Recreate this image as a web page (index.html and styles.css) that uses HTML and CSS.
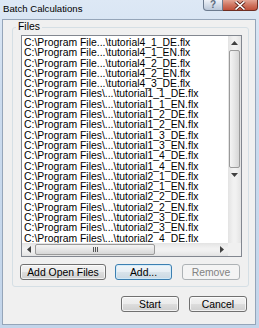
FILE: index.html
```html
<!DOCTYPE html>
<html lang="en">
<head>
    <meta charset="UTF-8">
    <meta name="viewport" content="width=device-width, initial-scale=1.0">
    <title>Batch Calculations</title>
    <link rel="stylesheet" href="styles.css">
</head>
<body>
    <div class="window">
        <div class="titlebar">
            <span class="title">Batch Calculations</span>
            <div class="caption-buttons">
                <span class="cap-help">?</span>
                <span class="cap-close">
                    <svg width="12" height="9" viewBox="0 0 12 9">
                        <path d="M1.5 0.5 L10.5 8.5 M10.5 0.5 L1.5 8.5" stroke="#5a2018" stroke-width="3.2"/>
                        <path d="M1.5 0.5 L10.5 8.5 M10.5 0.5 L1.5 8.5" stroke="#fff" stroke-width="1.6"/>
                    </svg>
                </span>
            </div>
        </div>
        <div class="client">
            <fieldset class="group">
                <legend>Files</legend>
                <div class="listbox">
                    <div class="list-area">
                        <div class="items">
                            <div>C:\Program File...\tutorial4_1_DE.flx</div>
                            <div>C:\Program File...\tutorial4_1_EN.flx</div>
                            <div>C:\Program File...\tutorial4_2_DE.flx</div>
                            <div>C:\Program File...\tutorial4_2_EN.flx</div>
                            <div>C:\Program File...\tutorial4_3_DE.flx</div>
                            <div>C:\Program Files\...\tutorial1_1_DE.flx</div>
                            <div>C:\Program Files\...\tutorial1_1_EN.flx</div>
                            <div>C:\Program Files\...\tutorial1_2_DE.flx</div>
                            <div>C:\Program Files\...\tutorial1_2_EN.flx</div>
                            <div>C:\Program Files\...\tutorial1_3_DE.flx</div>
                            <div>C:\Program Files\...\tutorial1_3_EN.flx</div>
                            <div>C:\Program Files\...\tutorial1_4_DE.flx</div>
                            <div>C:\Program Files\...\tutorial1_4_EN.flx</div>
                            <div>C:\Program Files\...\tutorial2_1_DE.flx</div>
                            <div>C:\Program Files\...\tutorial2_1_EN.flx</div>
                            <div>C:\Program Files\...\tutorial2_2_DE.flx</div>
                            <div>C:\Program Files\...\tutorial2_2_EN.flx</div>
                            <div>C:\Program Files\...\tutorial2_3_DE.flx</div>
                            <div>C:\Program Files\...\tutorial2_3_EN.flx</div>
                            <div>C:\Program Files\...\tutorial2_4_DE.flx</div>
                        </div>
                        <div class="vscroll">
                            <span class="arrow">
                                <svg width="7" height="4" viewBox="0 0 7 4"><path d="M0 4 L3.5 0 L7 4 Z" fill="#404040"/></svg>
                            </span>
                            <span class="vthumb"></span>
                            <span class="arrow">
                                <svg width="7" height="4" viewBox="0 0 7 4"><path d="M0 0 L7 0 L3.5 4 Z" fill="#404040"/></svg>
                            </span>
                        </div>
                    </div>
                    <div class="hscroll-row">
                        <div class="hscroll">
                            <span class="arrow">
                                <svg width="4" height="7" viewBox="0 0 4 7"><path d="M4 0 L4 7 L0 3.5 Z" fill="#404040"/></svg>
                            </span>
                            <span class="hthumb"><span class="grip"></span></span>
                            <span class="arrow">
                                <svg width="4" height="7" viewBox="0 0 4 7"><path d="M0 0 L4 3.5 L0 7 Z" fill="#404040"/></svg>
                            </span>
                        </div>
                        <div class="corner"></div>
                    </div>
                </div>
                <div class="button-row">
                    <button class="btn btn-wide">Add Open Files</button>
                    <button class="btn btn-default">Add...</button>
                    <button class="btn" disabled>Remove</button>
                </div>
            </fieldset>
            <div class="dialog-buttons">
                <button class="btn">Start</button>
                <button class="btn">Cancel</button>
            </div>
        </div>
    </div>
</body>
</html>
```

FILE: styles.css
```css
body {
    margin: 0;
    font-family: "Liberation Sans Narrow", "Liberation Sans", Arial, sans-serif;
    font-size: 10.4px;
    color: #000;
}
.window {
    width: 259px;
    height: 328px;
    box-sizing: border-box;
    background: linear-gradient(to bottom, #dde8f5 0%, #cbdbee 30%, #c3d5ea 100%);
    display: flex;
    flex-direction: column;
}
.titlebar {
    height: 19px;
    display: flex;
    justify-content: space-between;
    align-items: flex-start;
}
.title {
    font-family: "Liberation Sans", Arial, sans-serif;
    font-size: 9.6px;
    line-height: 10px;
    margin: 4px 0 0 3px;
}
.caption-buttons {
    display: flex;
    margin-right: 1px;
}
.cap-help,
.cap-close {
    height: 11px;
    display: flex;
    align-items: center;
    justify-content: center;
    box-sizing: border-box;
    border: 1px solid #6c7b8f;
    border-top: none;
}
.cap-help {
    width: 20px;
    background: linear-gradient(to bottom, #eef2f8 0%, #d3dce8 50%, #bac7d8 100%);
    border-radius: 0 0 0 4px;
    font-family: "Liberation Sans", Arial, sans-serif;
    font-size: 10px;
    font-weight: bold;
    color: #5d6b7d;
    line-height: 10px;
}
.cap-close {
    width: 35px;
    background: linear-gradient(to bottom, #e3a494 0%, #cf7560 50%, #c0503a 100%);
    border-color: #6e2e24;
    border-left: none;
    border-radius: 0 0 4px 0;
}
.client {
    flex: 1;
    margin: 0 3px 3px 2px;
    border: 1px solid #95a5b9;
    background-color: #f0f0f0;
    display: flex;
    flex-direction: column;
}
.group {
    margin: 2px 6px 0 9px;
    padding: 3px 6px 6px 8px;
    border: 1px solid #d5dfe5;
    border-radius: 3px;
    min-width: 0;
}
.group legend {
    padding: 0 2px;
    margin-left: -5px;
    line-height: 10px;
}
.listbox {
    width: 221px;
    height: 222px;
    box-sizing: border-box;
    border: 1px solid #828790;
    background-color: #fff;
    display: flex;
    flex-direction: column;
}
.list-area {
    flex: 1;
    display: flex;
    min-height: 0;
}
.items {
    flex: 1;
    padding: 2px 0 0 2px;
    line-height: 10.3px;
    white-space: nowrap;
    overflow: hidden;
}
.vscroll {
    width: 13px;
    background: linear-gradient(to right, #e3e3e3, #f1f1f1 40%, #f1f1f1 60%, #e3e3e3);
    display: flex;
    flex-direction: column;
    align-items: center;
}
.arrow {
    width: 13px;
    height: 13px;
    flex: none;
    display: flex;
    align-items: center;
    justify-content: center;
}
.vthumb {
    width: 11px;
    height: 118px;
    margin-top: 1px;
    box-sizing: border-box;
    border: 1px solid #9a9a9a;
    border-radius: 2px;
    background: linear-gradient(to right, #f4f4f4, #e6e6e6 50%, #d6d6d6);
}
.hscroll-row {
    height: 13px;
    display: flex;
}
.hscroll {
    flex: 1;
    display: flex;
    align-items: center;
    background: linear-gradient(to bottom, #e3e3e3, #f1f1f1 40%, #f1f1f1 60%, #e3e3e3);
}
.hthumb {
    width: 120px;
    height: 11px;
    box-sizing: border-box;
    border: 1px solid #9a9a9a;
    border-radius: 2px;
    background: linear-gradient(to bottom, #f4f4f4, #e6e6e6 50%, #d6d6d6);
    display: flex;
    align-items: center;
    justify-content: center;
}
.grip {
    width: 5px;
    height: 5px;
    background: repeating-linear-gradient(to right, #555 0, #555 1px, transparent 1px, transparent 2px);
}
.hscroll .arrow:last-child {
    margin-left: auto;
}
.corner {
    width: 13px;
    background-color: #f0f0f0;
}
.button-row {
    display: flex;
    gap: 9px;
    margin: 7px 0 0 -1px;
}
.btn {
    height: 16px;
    width: 58px;
    padding: 0;
    font-family: inherit;
    font-size: 10.4px;
    color: #000;
    border: 1px solid #707070;
    border-radius: 3px;
    background: linear-gradient(to bottom, #f2f2f2 0%, #ebebeb 50%, #dddddd 51%, #cfcfcf 100%);
    box-shadow: inset 0 0 0 1px rgba(255, 255, 255, 0.7);
}
.btn-wide {
    width: 86px;
}
.btn-default {
    width: 57px;
    margin-right: 1px;
    border-color: #3c7fb1;
    background: linear-gradient(to bottom, #f0f5f9 0%, #e6eef4 50%, #d8e3eb 51%, #cbd8e2 100%);
    box-shadow: inset 0 0 0 1px rgba(210, 235, 250, 0.9);
}
.btn:disabled {
    border-color: #adb2b5;
    background: #f4f4f4;
    color: #838383;
    box-shadow: none;
}
.dialog-buttons {
    display: flex;
    justify-content: flex-end;
    gap: 10px;
    margin: 9px 8px 0 0;
}
```
